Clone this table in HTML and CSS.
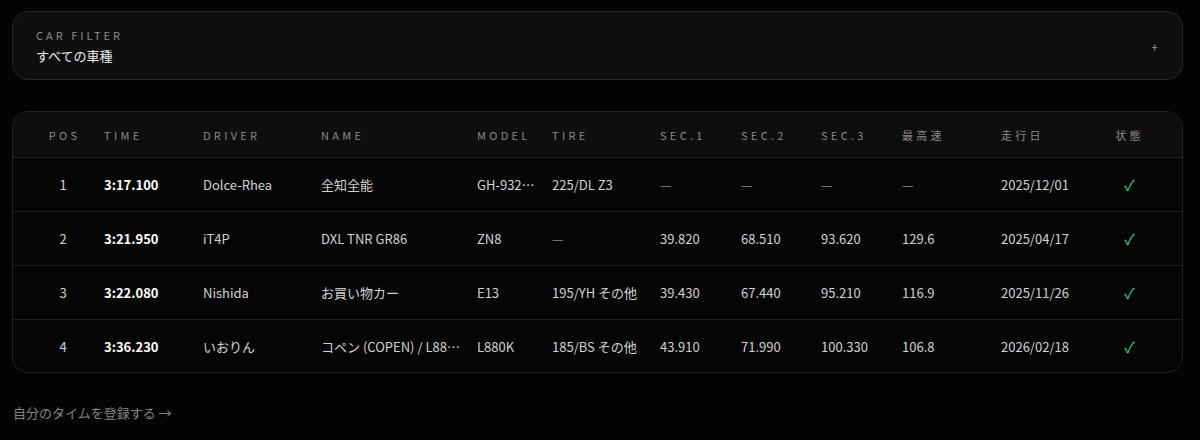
FILE: index.html
```html
<!DOCTYPE html>
<html lang="ja">
<head>
<meta charset="utf-8">
<link rel="stylesheet" href="styles.css">
</head>
<body>
<div class="page">
  <div class="filter">
    <div class="filter-text">
      <div class="filter-label">CAR FILTER</div>
      <div class="filter-value">すべての車種</div>
    </div>
    <span class="filter-plus">+</span>
  </div>

  <div class="board">
    <div class="row head">
      <div class="c pos">POS</div>
      <div class="c">TIME</div>
      <div class="c">DRIVER</div>
      <div class="c">NAME</div>
      <div class="c">MODEL</div>
      <div class="c">TIRE</div>
      <div class="c">SEC.1</div>
      <div class="c">SEC.2</div>
      <div class="c">SEC.3</div>
      <div class="c">最高速</div>
      <div class="c">走行日</div>
      <div class="c st">状態</div>
    </div>
    <div class="row">
      <div class="c pos">1</div>
      <div class="c time">3:17.100</div>
      <div class="c">Dolce-Rhea</div>
      <div class="c">全知全能</div>
      <div class="c">GH-932SPEC</div>
      <div class="c">225/DL Z3</div>
      <div class="c dash">—</div>
      <div class="c dash">—</div>
      <div class="c dash">—</div>
      <div class="c dash">—</div>
      <div class="c">2025/12/01</div>
      <div class="c st ok">✓</div>
    </div>
    <div class="row">
      <div class="c pos">2</div>
      <div class="c time">3:21.950</div>
      <div class="c">iT4P</div>
      <div class="c">DXL TNR GR86</div>
      <div class="c">ZN8</div>
      <div class="c dash">—</div>
      <div class="c">39.820</div>
      <div class="c">68.510</div>
      <div class="c">93.620</div>
      <div class="c">129.6</div>
      <div class="c">2025/04/17</div>
      <div class="c st ok">✓</div>
    </div>
    <div class="row">
      <div class="c pos">3</div>
      <div class="c time">3:22.080</div>
      <div class="c">Nishida</div>
      <div class="c">お買い物カー</div>
      <div class="c">E13</div>
      <div class="c">195/YH その他</div>
      <div class="c">39.430</div>
      <div class="c">67.440</div>
      <div class="c">95.210</div>
      <div class="c">116.9</div>
      <div class="c">2025/11/26</div>
      <div class="c st ok">✓</div>
    </div>
    <div class="row last">
      <div class="c pos">4</div>
      <div class="c time">3:36.230</div>
      <div class="c">いおりん</div>
      <div class="c">コペン (COPEN) / L880K ローブ</div>
      <div class="c">L880K</div>
      <div class="c">185/BS その他</div>
      <div class="c">43.910</div>
      <div class="c">71.990</div>
      <div class="c">100.330</div>
      <div class="c">106.8</div>
      <div class="c">2026/02/18</div>
      <div class="c st ok">✓</div>
    </div>
  </div>

  <a class="register" href="#">自分のタイムを登録する →</a>
</div>
</body>
</html>
```

FILE: styles.css
```css
* { box-sizing: border-box; }
html, body {
  margin: 0;
  padding: 0;
  background: #040404;
}
body {
  font-family: "Noto Sans CJK JP", "Noto Sans", sans-serif;
  color: #d2d2d2;
}
.page {
  padding: 11px 17px 0 12px;
  display: flex;
  flex-direction: column;
}
.filter {
  height: 69px;
  border: 1px solid #262626;
  border-radius: 16px;
  background: #0e0e0e;
  padding: 16px 24px 14px 23px;
  display: flex;
  align-items: center;
  justify-content: space-between;
}
.filter-text {
  display: flex;
  flex-direction: column;
  align-self: flex-start;
}
.filter-label {
  font-size: 11px;
  line-height: 14px;
  letter-spacing: 3px;
  color: #8c8c8c;
}
.filter-value {
  margin-top: 5px;
  font-size: 13px;
  line-height: 18px;
  color: #ececec;
}
.filter-plus {
  font-size: 12px;
  color: #9a9a9a;
}
.board {
  margin-top: 31px;
  border: 1px solid #222;
  border-radius: 16px;
  background: #050505;
  overflow: hidden;
}
.row {
  display: grid;
  grid-template-columns: 75px 99px 118px 156px 75px 108px 81px 80px 81px 99px 104px 49px 1fr;
  padding-left: 16px;
  height: 54px;
  align-items: center;
  border-bottom: 1px solid #1f1f1f;
  font-size: 13px;
}
.row.last { border-bottom: none; height: 52px; }
.row.head {
  height: 46px;
  background: #0e0e0e;
  font-size: 11px;
  letter-spacing: 3.3px;
  color: #8a8a8a;
  border-bottom: 1px solid #232323;
}
.c {
  padding-right: 14px;
  white-space: nowrap;
  overflow: hidden;
  text-overflow: ellipsis;
}
.pos {
  text-align: center;
  padding-right: 7px;
  padding-left: 0;
}
.row.head .pos { padding-left: 3px; }
.time {
  font-weight: 700;
  color: #ffffff;
}
.dash { color: #8c8c8c; }
.st {
  text-align: center;
  padding-right: 0;
}
.ok {
  color: #3fd58f;
  font-size: 15px;
}
.register {
  margin-top: 30px;
  padding-left: 1px;
  font-size: 13px;
  line-height: 20px;
  color: #858585;
  text-decoration: none;
  align-self: flex-start;
}
```
